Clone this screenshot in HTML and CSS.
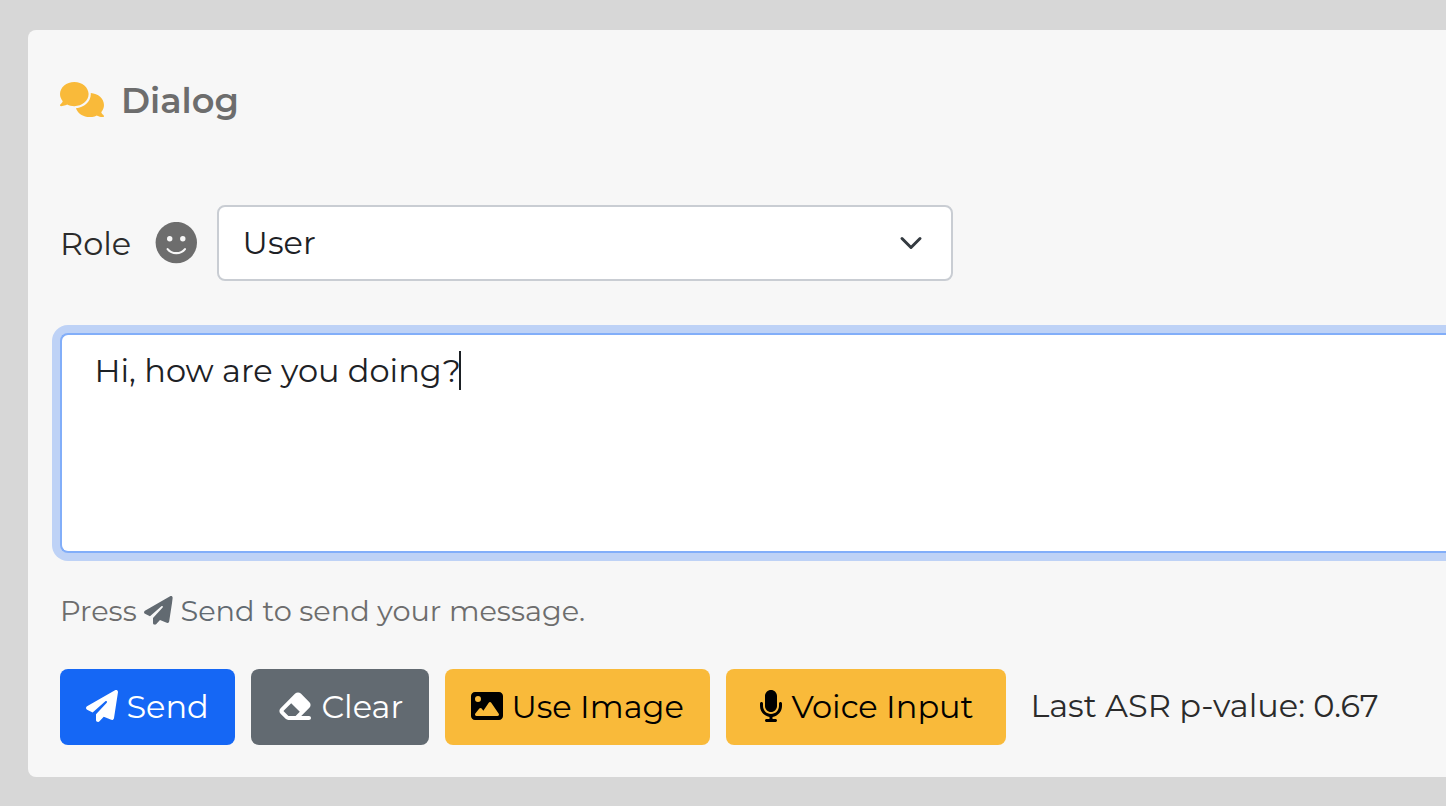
FILE: index.html
```html
<!DOCTYPE html>
<html lang="en">
<head>
<meta charset="utf-8">
<title>Dialog</title>
<link rel="stylesheet" href="styles.css">
</head>
<body>
<svg class="sprite" width="0" height="0">
  <symbol id="plane" viewBox="0 0 512 512"><path d="M498.1 5.6c10.1 7 15.4 19.1 13.5 31.2l-64 416c-1.5 9.7-7.4 18.2-16 23s-18.9 5.4-28 1.6L284 427.7l-68.5 74.1c-8.9 9.7-22.9 12.9-35.2 8.1S160 493.2 160 480V396.4c0-4 1.5-7.8 4.2-10.7L331.8 202.8c5.8-6.3 5.6-16-.4-22s-15.7-6.4-22-.7L106 360.8 17.7 316.6C7.1 311.3 .3 300.7 0 288.9s5.9-22.8 16.1-28.7l448-256c10.7-6.1 23.9-5.5 34 1.4z"/></symbol>
</svg>
<main class="card">
  <h1 class="title">
    <svg class="title-icon" viewBox="0 0 640 512"><path d="M208 352c114.9 0 208-78.8 208-176S322.9 0 208 0S0 78.8 0 176c0 38.6 14.7 74.3 39.6 103.4c-3.5 9.4-8.7 17.7-14.2 24.7c-4.8 6.2-9.7 11-13.3 14.3c-1.8 1.6-3.3 2.9-4.3 3.7c-.5 .4-.9 .7-1.1 .8l-.2 .2C1 327.2-1.4 334.4 .8 340.9S9.1 352 16 352c21.8 0 43.8-5.6 62.1-12.5c9.2-3.5 17.8-7.4 25.2-11.4C134.1 343.3 169.8 352 208 352zM448 176c0 112.3-99.1 196.9-216.5 207C255.8 457.4 336.4 512 432 512c38.2 0 73.9-8.7 104.7-23.9c7.5 4 16 7.9 25.2 11.4c18.3 6.9 40.3 12.5 62.1 12.5c6.9 0 13.1-4.5 15.2-11.1c2.1-6.6-.2-13.8-5.8-17.9l-.2-.2c-.2-.2-.6-.4-1.1-.8c-1-.8-2.5-2-4.3-3.7c-3.6-3.3-8.5-8.1-13.3-14.3c-5.5-7-10.7-15.4-14.2-24.7c24.9-29 39.6-64.7 39.6-103.4c0-92.8-84.9-168.9-192.6-175.5c.4 5.1 .6 10.3 .6 15.5z"/></svg>
    <span class="title-text">Dialog</span>
  </h1>
  <div class="role-row">
    <span class="role-label">Role</span>
    <svg class="face" viewBox="0 0 42 42"><circle cx="21.3" cy="20.6" r="20.7" fill="#6d6d6d"/><circle cx="14.7" cy="16.8" r="2.7" fill="#f7f7f7"/><circle cx="27.8" cy="16.8" r="2.7" fill="#f7f7f7"/><path d="M12.6 27.1C16.8 32.5 25.8 32.5 30 27.1" fill="none" stroke="#f7f7f7" stroke-width="2.1" stroke-linecap="round"/></svg>
    <div class="select">
      <span>User</span>
      <svg class="chevron" viewBox="0 0 16 16"><path fill="none" stroke="#343a40" stroke-linecap="round" stroke-linejoin="round" stroke-width="2" d="m2 5 6 6 6-6"/></svg>
    </div>
  </div>
  <div class="message"><span class="message-text">Hi, how are you doing?</span><span class="caret"></span></div>
  <div class="hint">
    <span class="hint-press">Press</span>
    <svg class="hint-icon"><use href="#plane"/></svg>
    <span class="hint-send">Send</span>
    <span>to send your message.</span>
  </div>
  <div class="actions">
    <div class="btn send"><svg class="icon"><use href="#plane"/></svg><span>Send</span></div>
    <div class="btn clear"><svg class="icon-wide" viewBox="0 0 576 512"><path d="M290.7 57.4L57.4 290.7c-25 25-25 65.5 0 90.5l80 80c12 12 28.3 18.7 45.3 18.7H288h9.4H512c17.7 0 32-14.3 32-32s-14.3-32-32-32H387.9L518.6 285.3c25-25 25-65.5 0-90.5L381.3 57.4c-25-25-65.5-25-90.5 0zM297.4 416H288l-105.4 0-80-80L227.3 211.3 364.7 348.7 297.4 416z"/></svg><span>Clear</span></div>
    <div class="btn image"><svg class="icon" viewBox="0 0 512 512"><path d="M0 96C0 60.7 28.7 32 64 32H448c35.3 0 64 28.7 64 64V416c0 35.3-28.7 64-64 64H64c-35.3 0-64-28.7-64-64V96zM323.8 202.5c-4.5-6.6-11.9-10.5-19.8-10.5s-15.4 3.9-19.8 10.5l-87 127.6L170.7 297c-4.6-5.7-11.5-9-18.7-9s-14.2 3.3-18.7 9l-64 80c-5.8 7.2-6.9 17.1-2.9 25.4s12.4 13.6 21.6 13.6h96 32H424c8.9 0 17.1-4.9 21.2-12.8s3.6-17.4-1.4-24.7l-120-176zM112 192a48 48 0 1 0 0-96 48 48 0 1 0 0 96z"/></svg><span>Use Image</span></div>
    <div class="btn voice"><svg class="icon-mic" viewBox="0 0 384 512"><path d="M192 0C139 0 96 43 96 96V256c0 53 43 96 96 96s96-43 96-96V96c0-53-43-96-96-96zM64 216c0-13.3-10.7-24-24-24s-24 10.7-24 24v40c0 89.1 66.2 162.7 152 174.4V464H120c-13.3 0-24 10.7-24 24s10.7 24 24 24h72 72c13.3 0 24-10.7 24-24s-10.7-24-24-24H216V430.4c85.8-11.7 152-85.3 152-174.4V216c0-13.3-10.7-24-24-24s-24 10.7-24 24v40c0 70.7-57.3 128-128 128s-128-57.3-128-128V216z"/></svg><span>Voice Input</span></div>
    <span class="asr">Last ASR p-value: 0.67</span>
  </div>
</main>
</body>
</html>
```

FILE: styles.css
```css
* { box-sizing: border-box; }
html, body { height: 100%; }
body {
  margin: 0;
  padding: 30px 0 29px 28px;
  background: #d7d7d7;
  font-family: Montserrat, Inter, "Liberation Sans", sans-serif;
  font-size: 32px;
  line-height: 40px;
  color: #2b2b2b;
  overflow: hidden;
  white-space: nowrap;
}
svg { display: block; flex: none; fill: currentColor; }
.sprite { position: absolute; }
.card {
  height: 747px;
  padding: 46px 0 0 32px;
  border-radius: 8px 0 0 8px;
  background: #f7f7f7;
}
.title {
  display: flex;
  align-items: center;
  height: 49px;
  margin: 0;
  font-size: 35.2px;
  font-weight: 600;
  color: #6d6d6d;
}
.title-icon { width: 44px; height: 35.2px; margin: 0 17px 2px 0; color: #f9ba3a; }
.role-row { display: flex; align-items: center; height: 76px; margin-top: 80px; }
.role-label { width: 95px; padding-top: 2px; }
.face { width: 42px; height: 42px; }
.select {
  display: flex;
  align-items: center;
  justify-content: space-between;
  width: 736px;
  height: 76px;
  margin-left: 20px;
  padding: 0 28px 0 23.6px;
  border: 2px solid #c9cdd3;
  border-radius: 8px;
  background: #fff;
  color: #1d2125;
}
.chevron { width: 24px; height: 24px; }
.message {
  display: flex;
  height: 220px;
  margin-top: 52px;
  padding: 16px 0 0 32.5px;
  border: 2px solid #82aef9;
  border-right: 0;
  border-radius: 8px 0 0 8px;
  background: #fff;
  box-shadow: 0 0 0 8px #bed2f6;
  color: #1d2125;
}
.message-text { width: 364.5px; }
.caret { width: 2px; height: 39px; background: #1d2125; }
.hint {
  display: flex;
  align-items: center;
  height: 40px;
  margin-top: 38px;
  font-size: 28.8px;
  color: #6d6d6d;
}
.hint-press { width: 84px; }
.hint-icon { width: 28.8px; height: 28.8px; margin-bottom: 1px; color: #626a71; }
.hint-send { width: 82px; margin-left: 7.7px; color: #626a71; }
.actions { display: flex; align-items: center; gap: 16px; height: 76px; margin-top: 38px; }
.btn {
  display: flex;
  align-items: center;
  height: 76px;
  padding-left: 26px;
  border-radius: 8px;
  background: #f9ba3a;
  color: #000;
}
.btn svg { margin: 0 8.4px 2px 0; }
.icon { width: 32px; height: 32px; }
.icon-wide { width: 36px; height: 32px; }
.icon-mic { width: 24px; height: 32px; }
.send { width: 175px; background: #1567f5; color: #fff; }
.clear { width: 178px; background: #626a71; color: #fff; }
.image { width: 265px; }
.voice { width: 280px; padding-left: 33px; }
.asr { margin-left: 8.4px; padding-bottom: 2px; }
```
